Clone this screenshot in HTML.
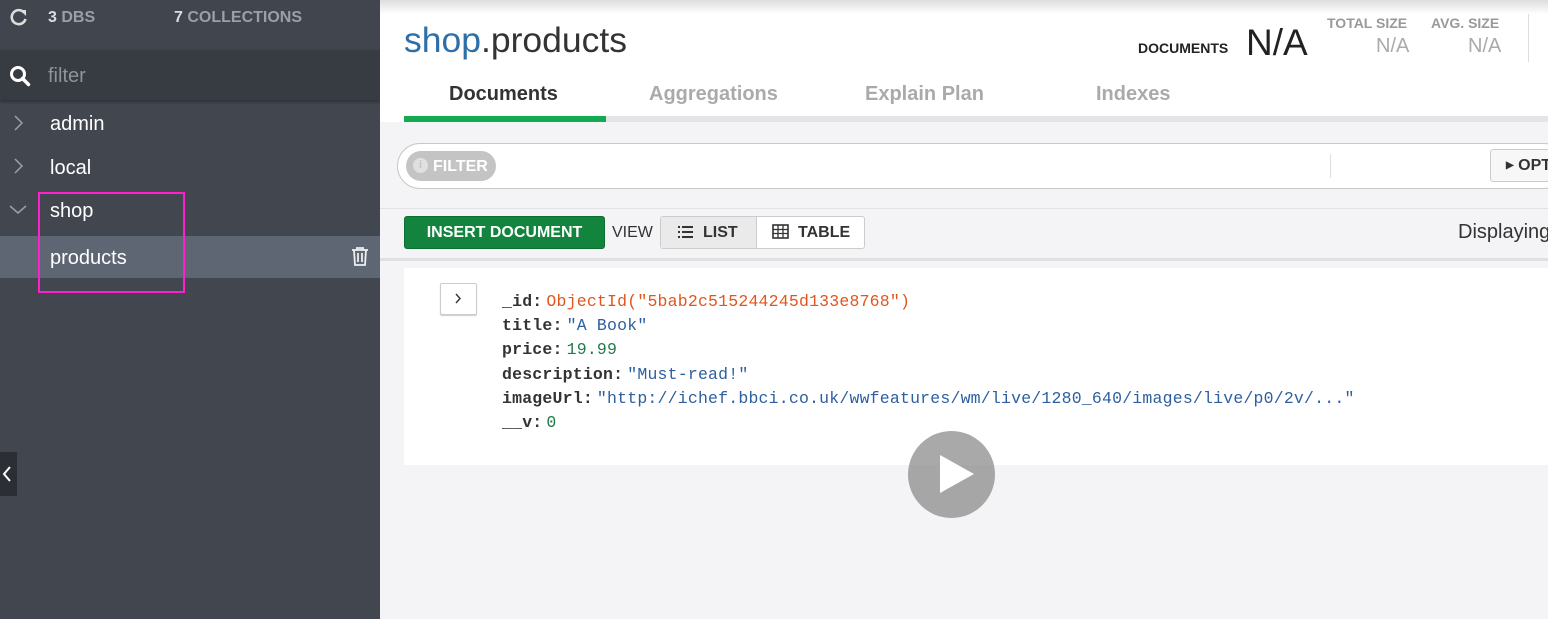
<!DOCTYPE html>
<html><head><meta charset="utf-8"><style>
*{margin:0;padding:0;box-sizing:border-box}
body{width:1548px;height:619px;overflow:hidden;position:relative;font-family:"Liberation Sans",sans-serif;background:#f4f4f6}
.abs{position:absolute;white-space:nowrap}
#side{left:0;top:0;width:380px;height:619px;background:#42464e}
.mono{font-family:"Liberation Mono",monospace;font-size:16.5px}
.mono b{margin-right:4px}
</style></head><body>
<div id="side" class="abs">
  <div class="abs" style="left:0;top:0;width:380px;height:50px;background:#41454d"></div>
  <svg class="abs" style="left:9px;top:7px" width="20" height="20" viewBox="0 0 20 20"><path d="M15 5.5A7 7 0 1 0 16.5 12" fill="none" stroke="#ddd" stroke-width="2.6"/><path d="M11 3h6v6z" fill="#ddd"/></svg>
  <div class="abs" style="left:48px;top:9px;font-size:16px;font-weight:bold;color:#9aa0a8"><span style="color:#ddd">3</span> DBS</div>
  <div class="abs" style="left:174px;top:9px;font-size:16px;font-weight:bold;color:#9aa0a8"><span style="color:#ddd">7</span> COLLECTIONS</div>
  <div class="abs" style="left:0;top:50px;width:380px;height:50px;background:#373b42;box-shadow:0 2px 3px rgba(0,0,0,.3)"></div>
  <svg class="abs" style="left:9px;top:65px" width="22" height="22" viewBox="0 0 22 22"><circle cx="9" cy="9" r="6.5" fill="none" stroke="#fff" stroke-width="3"/><path d="M13.5 13.5l6 6" stroke="#fff" stroke-width="3.5" stroke-linecap="round"/></svg>
  <div class="abs" style="left:48px;top:65px;font-size:20px;color:#8d939b">filter</div>
  <svg class="abs" style="left:12px;top:114px" width="14" height="18"><path d="M3 2l7 7-7 7" fill="none" stroke="#9aa0a8" stroke-width="1.5"/></svg>
  <div class="abs" style="left:50px;top:113px;font-size:20px;color:#fff">admin</div>
  <svg class="abs" style="left:12px;top:157px" width="14" height="18"><path d="M3 2l7 7-7 7" fill="none" stroke="#9aa0a8" stroke-width="1.5"/></svg>
  <div class="abs" style="left:50px;top:157px;font-size:20px;color:#fff">local</div>
  <svg class="abs" style="left:8px;top:203px" width="20" height="14"><path d="M2 3l8 7 8-7" fill="none" stroke="#9aa0a8" stroke-width="1.5"/></svg>
  <div class="abs" style="left:50px;top:200px;font-size:20px;color:#fff">shop</div>
  <div class="abs" style="left:0;top:236px;width:380px;height:42px;background:#5d6672"></div>
  <div class="abs" style="left:50px;top:247px;font-size:20px;color:#fff">products</div>
  <svg class="abs" style="left:350px;top:246px" width="20" height="21" viewBox="0 0 20 21"><path d="M2 4h16M7 4V2h6v2M4 4l1 15h10l1-15M8 7v9M12 7v9" fill="none" stroke="#eee" stroke-width="1.8"/></svg>
  <div class="abs" style="left:38px;top:192px;width:147px;height:101px;border:2px solid #ff1fce"></div>
  <div class="abs" style="left:0;top:452px;width:17px;height:44px;background:#2b2f35"></div>
  <svg class="abs" style="left:1px;top:465px" width="12" height="18"><path d="M9 2L3 9l6 7" fill="none" stroke="#fff" stroke-width="2"/></svg>
</div>
<div class="abs" style="left:380px;top:0;width:1168px;height:122px;background:#fff"></div>
<div class="abs" style="left:380px;top:0;width:1168px;height:14px;background:linear-gradient(#ddd,#fff)"></div>
<div class="abs" style="left:404px;top:20px;font-size:35.5px;color:#333"><span style="color:#2d6fa8">shop</span>.products</div>
<div class="abs" style="left:1138px;top:40px;font-size:14px;font-weight:bold;color:#222">DOCUMENTS</div>
<div class="abs" style="left:1246px;top:22px;font-size:37px;color:#222">N/A</div>
<div class="abs" style="left:1327px;top:15px;font-size:14px;font-weight:bold;color:#999">TOTAL SIZE</div>
<div class="abs" style="left:1376px;top:35px;font-size:20px;color:#aaa">N/A</div>
<div class="abs" style="left:1431px;top:15px;font-size:14px;font-weight:bold;color:#999">AVG. SIZE</div>
<div class="abs" style="left:1468px;top:35px;font-size:20px;color:#aaa">N/A</div>
<div class="abs" style="left:1528px;top:14px;width:1px;height:48px;background:#ddd"></div>
<div class="abs" style="left:404px;top:116px;width:1144px;height:6px;background:#e4e4e6"></div>
<div class="abs" style="left:404px;top:116px;width:202px;height:6px;background:#13aa52"></div>
<div class="abs" style="left:449px;top:83px;font-size:20px;font-weight:bold;color:#333">Documents</div>
<div class="abs" style="left:649px;top:83px;font-size:20px;font-weight:bold;color:#aaa">Aggregations</div>
<div class="abs" style="left:865px;top:83px;font-size:20px;font-weight:bold;color:#aaa">Explain Plan</div>
<div class="abs" style="left:1096px;top:83px;font-size:20px;font-weight:bold;color:#aaa">Indexes</div>
<div class="abs" style="left:397px;top:143px;width:1170px;height:46px;background:#fff;border:1.5px solid #c8c8c8;border-radius:23px"></div>
<div class="abs" style="left:406px;top:151px;width:90px;height:30px;background:#c4c4c4;border-radius:15px"></div>
<div class="abs" style="left:413px;top:158px;width:15px;height:15px;border-radius:50%;background:#e0e0e0;color:#c4c4c4;font-size:11px;font-weight:bold;text-align:center;line-height:15px">i</div>
<div class="abs" style="left:433px;top:158px;font-size:16px;font-weight:bold;color:#fff">FILTER</div>
<div class="abs" style="left:1330px;top:154px;width:1px;height:24px;background:#ddd"></div>
<div class="abs" style="left:1490px;top:149px;width:70px;height:33px;background:#f7f7f7;border:1.5px solid #ccc;border-radius:3px"></div>
<div class="abs" style="left:1506px;top:157px;font-size:16px;font-weight:bold;color:#333"><span style="font-size:10px;vertical-align:2px">▶</span> OPT</div>
<div class="abs" style="left:380px;top:208px;width:1168px;height:1px;background:#e2e2e4"></div>
<div class="abs" style="left:404px;top:216px;width:201px;height:33px;background:#13843e;border:1px solid #0d6e33;border-radius:3px;color:#fff;font-size:16px;font-weight:bold;text-align:center;line-height:31px">INSERT DOCUMENT</div>
<div class="abs" style="left:612px;top:224px;font-size:16px;color:#333">VIEW</div>
<div class="abs" style="left:660px;top:216px;width:205px;height:33px;border:1.5px solid #ccc;border-radius:3px;background:#fff"></div>
<div class="abs" style="left:661px;top:217px;width:96px;height:31px;background:#eaeaea;border-right:1.5px solid #ccc"></div>
<svg class="abs" style="left:677px;top:225px" width="17" height="14"><path d="M1 2h2M1 7h2M1 12h2M5 2h11M5 7h11M5 12h11" stroke="#333" stroke-width="2"/></svg>
<div class="abs" style="left:703px;top:224px;font-size:16px;font-weight:bold;color:#333">LIST</div>
<svg class="abs" style="left:772px;top:224px" width="17" height="15"><rect x="1" y="1" width="15" height="13" fill="none" stroke="#333" stroke-width="1.6"/><path d="M1 5.5h15M1 9.5h15M6 1v13M11 1v13" stroke="#333" stroke-width="1.3"/></svg>
<div class="abs" style="left:798px;top:224px;font-size:16px;font-weight:bold;color:#333">TABLE</div>
<div class="abs" style="left:1458px;top:221px;font-size:20px;color:#333">Displaying</div>
<div class="abs" style="left:380px;top:258px;width:1168px;height:3px;background:#e0e0e2"></div>
<div class="abs" style="left:404px;top:268px;width:1144px;height:197px;background:#fff"></div>
<div class="abs" style="left:440px;top:283px;width:37px;height:32px;border:1px solid #ccc;border-radius:2px;background:#fff;box-shadow:0 1px 1px #ccc"></div>
<svg class="abs" style="left:453px;top:292px" width="10" height="13"><path d="M3 2l4 4.5-4 4.5" fill="none" stroke="#333" stroke-width="1.4"/></svg>
<div class="abs mono" style="left:502px;top:290px;line-height:24.2px;color:#333;letter-spacing:0.2px">
<div><b>_id:</b><span style="color:#e2551c">ObjectId("5bab2c515244245d133e8768")</span></div>
<div><b>title:</b><span style="color:#2d5fa0">"A Book"</span></div>
<div><b>price:</b><span style="color:#1e7a4a">19.99</span></div>
<div><b>description:</b><span style="color:#2d5fa0">"Must-read!"</span></div>
<div><b>imageUrl:</b><span style="color:#2d5fa0">"http://ichef.bbci.co.uk/wwfeatures/wm/live/1280_640/images/live/p0/2v/..."</span></div>
<div><b>__v:</b><span style="color:#1e7a4a">0</span></div>
</div>
<div class="abs" style="left:908px;top:431px;width:87px;height:87px;border-radius:50%;background:rgba(140,140,140,.75)"></div>
<svg class="abs" style="left:938px;top:453px" width="40" height="42"><path d="M2 2l34 19L2 40z" fill="#fff"/></svg>
</body></html>
